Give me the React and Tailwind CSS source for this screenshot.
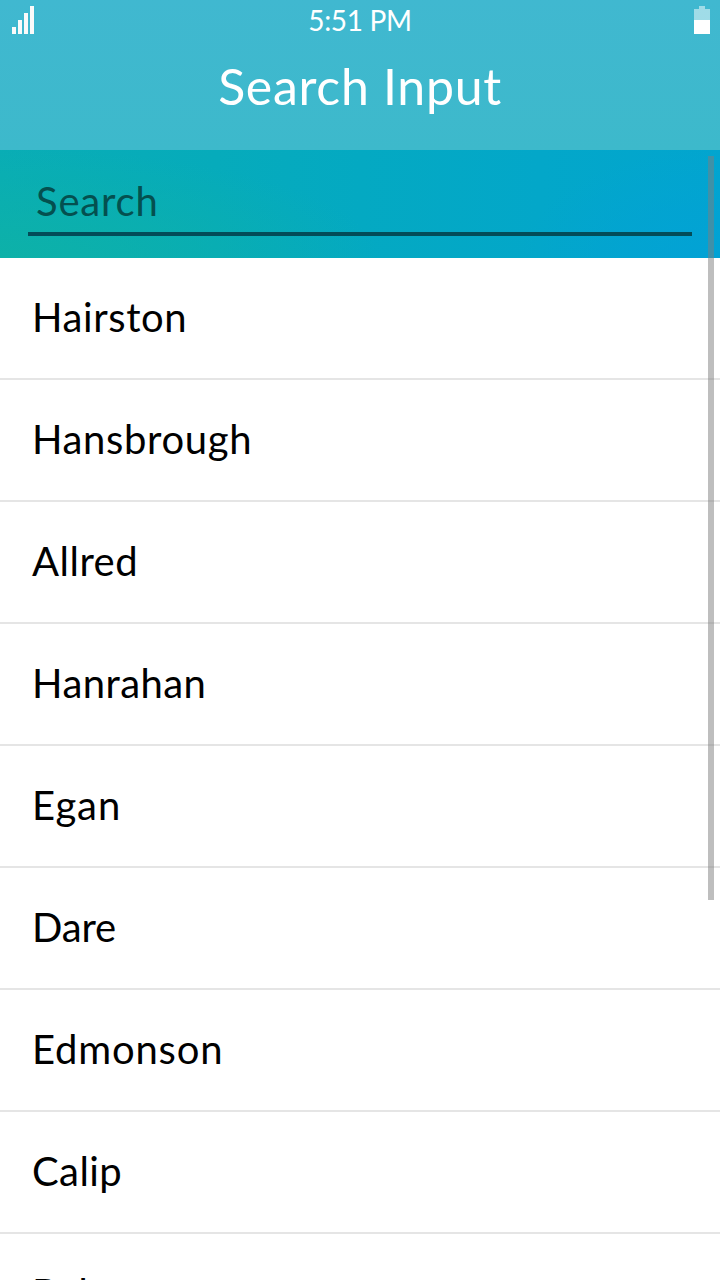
const items = [
  { name: 'Hairston', tracking: 'tracking-[0.6px]' },
  { name: 'Hansbrough', tracking: 'tracking-[0.65px]' },
  { name: 'Allred', tracking: 'tracking-[0.5px]' },
  { name: 'Hanrahan', tracking: 'tracking-[0.45px]' },
  { name: 'Egan', tracking: 'tracking-[0.9px]' },
  { name: 'Dare', tracking: 'tracking-[-0.2px]' },
  { name: 'Edmonson', tracking: 'tracking-[0.8px]' },
  { name: 'Calip', tracking: 'tracking-[0.4px]' },
  { name: 'Baker', tracking: 'tracking-[0.5px]' },
];

function SignalIcon() {
  return (
    <svg className="h-7 w-[22px]" viewBox="0 0 22 28" fill="#fafafa" shapeRendering="crispEdges">
      <rect x="0" y="21" width="4" height="7" />
      <rect x="6" y="14" width="4" height="14" />
      <rect x="12" y="7" width="4" height="21" />
      <rect x="18" y="0" width="4" height="28" />
    </svg>
  );
}

function BatteryIcon() {
  return (
    <svg className="h-7 w-4" viewBox="0 0 16 28" shapeRendering="crispEdges">
      <path d="M5 0h6v3h5v11H0V3h5z" fill="#fff" fillOpacity="0.5" />
      <rect x="0" y="14" width="16" height="14" fill="#fff" />
    </svg>
  );
}

export default function App() {
  return (
    <div className="relative flex h-[1280px] w-[720px] flex-col overflow-hidden bg-white font-['Lato','Noto_Sans',sans-serif]">
      <header className="h-[150px] shrink-0 bg-linear-to-b from-[#40b8d0] to-[#3db9cb] text-white">
        <div className="grid h-10 grid-cols-[1fr_auto_1fr] items-center pr-[10px] pl-3">
          <SignalIcon />
          <span className="pr-0.5 text-[28px] leading-10 tracking-[-0.3px]">5:51 PM</span>
          <div className="flex justify-end">
            <BatteryIcon />
          </div>
        </div>
        <h1 className="text-center text-[50px] leading-[92px] tracking-[0.7px]">Search Input</h1>
      </header>
      <div className="h-[108px] shrink-0 bg-[radial-gradient(380px_110px_at_0%_100%,#0db1a8_0%,#0db1a800_100%),radial-gradient(200px_110px_at_100%_100%,#02a2d5_0%,#02a2d500_100%),linear-gradient(90deg,#09adb5_0%,#06abbb_30%,#04a9c2_50%,#03a7c9_75%,#02a5cf_100%)] px-7 pt-5">
        <div className="h-[66px] border-b-4 border-[#034c58] px-2 text-[40px] leading-[62px] tracking-[0.8px] text-[#04504f]">
          Search
        </div>
      </div>
      <ul>
        {items.map((item) => (
          <li
            key={item.name}
            className={`h-[122px] border-b-2 border-[#e5e5e5] pl-8 text-[40px] leading-[118px] text-black ${item.tracking}`}
          >
            {item.name}
          </li>
        ))}
      </ul>
      <div className="absolute top-[156px] right-[6px] h-[744px] w-[6px] bg-[#7d7d7d]/50" />
    </div>
  );
}
